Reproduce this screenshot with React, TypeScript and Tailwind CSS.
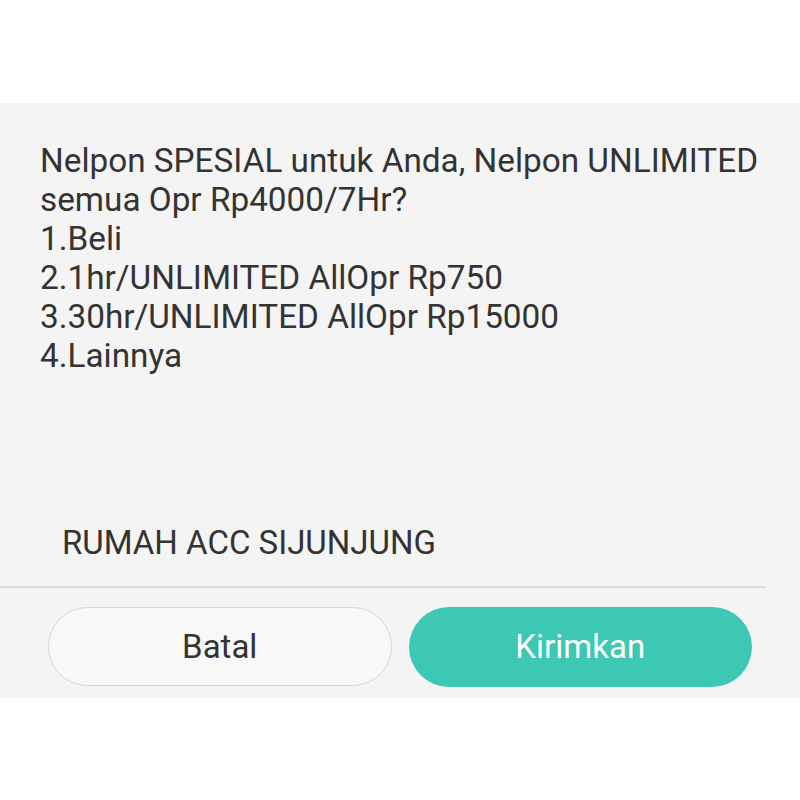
export default function App() {
  const lines = [
    'Nelpon SPESIAL untuk Anda, Nelpon UNLIMITED',
    'semua Opr Rp4000/7Hr?',
    '1.Beli',
    '2.1hr/UNLIMITED AllOpr Rp750',
    '3.30hr/UNLIMITED AllOpr Rp15000',
    '4.Lainnya',
  ];

  return (
    <div className="w-[800px] h-[800px] bg-white font-['Roboto',sans-serif]">
      <div className="h-[103px]" />
      <div className="h-[595px] bg-[#f4f4f4] flex flex-col">
        <div className="pl-[40px] pt-[38px] text-[33.3px] leading-[39px] text-[#333333]">
          {lines.map((line) => (
            <div key={line}>{line}</div>
          ))}
        </div>
        <div className="mt-auto pl-[62px] pb-[24px] text-[33px] leading-[38px] text-[#333333]">
          RUMAH ACC SIJUNJUNG
        </div>
        <div className="h-[2px] bg-[#dcdcdc] mr-[34px]" />
        <div className="flex gap-[17px] px-[48px] pt-[19px] pb-[11px]">
          <button className="w-[344px] h-[79px] rounded-full border border-[#d6d6d6] bg-[#f8f8f8] text-[33px] text-[#333333]">
            Batal
          </button>
          <button className="w-[344px] h-[80px] rounded-full bg-[#3cc8b3] text-[33px] text-white">
            Kirimkan
          </button>
        </div>
      </div>
    </div>
  );
}
